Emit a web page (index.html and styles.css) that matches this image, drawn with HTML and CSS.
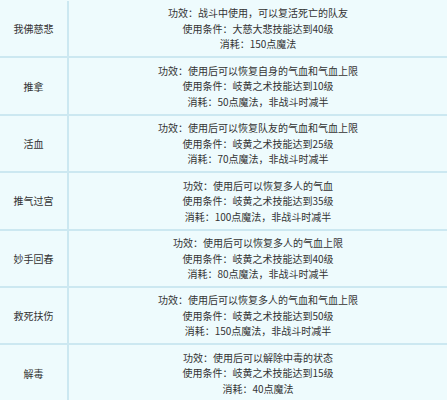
FILE: index.html
```html
<!DOCTYPE html>
<html lang="zh-CN">
<head>
<meta charset="utf-8">
<title>技能表</title>
<link rel="stylesheet" href="styles.css">
</head>
<body>
<div class="table">
  <div class="row">
    <div class="name">我佛慈悲</div>
    <div class="desc">
      <p>功效：战斗中使用，可以复活死亡的队友</p>
      <p>使用条件：大慈大悲技能达到40级</p>
      <p>消耗：150点魔法</p>
    </div>
  </div>
  <div class="row">
    <div class="name">推拿</div>
    <div class="desc">
      <p>功效：使用后可以恢复自身的气血和气血上限</p>
      <p>使用条件：岐黄之术技能达到10级</p>
      <p>消耗：50点魔法，非战斗时减半</p>
    </div>
  </div>
  <div class="row">
    <div class="name">活血</div>
    <div class="desc">
      <p>功效：使用后可以恢复队友的气血和气血上限</p>
      <p>使用条件：岐黄之术技能达到25级</p>
      <p>消耗：70点魔法，非战斗时减半</p>
    </div>
  </div>
  <div class="row">
    <div class="name">推气过宫</div>
    <div class="desc">
      <p>功效：使用后可以恢复多人的气血</p>
      <p>使用条件：岐黄之术技能达到35级</p>
      <p>消耗：100点魔法，非战斗时减半</p>
    </div>
  </div>
  <div class="row">
    <div class="name">妙手回春</div>
    <div class="desc">
      <p>功效：使用后可以恢复多人的气血上限</p>
      <p>使用条件：岐黄之术技能达到40级</p>
      <p>消耗：80点魔法，非战斗时减半</p>
    </div>
  </div>
  <div class="row">
    <div class="name">救死扶伤</div>
    <div class="desc">
      <p>功效：使用后可以恢复多人的气血和气血上限</p>
      <p>使用条件：岐黄之术技能达到50级</p>
      <p>消耗：150点魔法，非战斗时减半</p>
    </div>
  </div>
  <div class="row">
    <div class="name">解毒</div>
    <div class="desc">
      <p>功效：使用后可以解除中毒的状态</p>
      <p>使用条件：岐黄之术技能达到15级</p>
      <p>消耗：40点魔法</p>
    </div>
  </div>
</div>
</body>
</html>
```

FILE: styles.css
```css
html, body {
  margin: 0;
  padding: 0;
  background: #eefbfd;
}

body {
  font-family: "Noto Sans CJK SC", "Noto Sans", sans-serif;
  font-size: 10px;
  color: #333;
  overflow: hidden;
}

.table {
  display: flex;
  flex-direction: column;
  margin-top: 1px;
}

.row {
  display: grid;
  grid-template-columns: 69px 1fr;
  height: 57.4px;
  box-sizing: border-box;
  border-bottom: 2px solid #cce8f1;
}

.name {
  display: flex;
  align-items: center;
  justify-content: center;
  border-right: 2px solid #cce8f1;
}

.desc {
  display: flex;
  flex-direction: column;
  align-items: center;
  justify-content: center;
  line-height: 15.5px;
}

.desc p {
  margin: 0;
  white-space: nowrap;
}
```
